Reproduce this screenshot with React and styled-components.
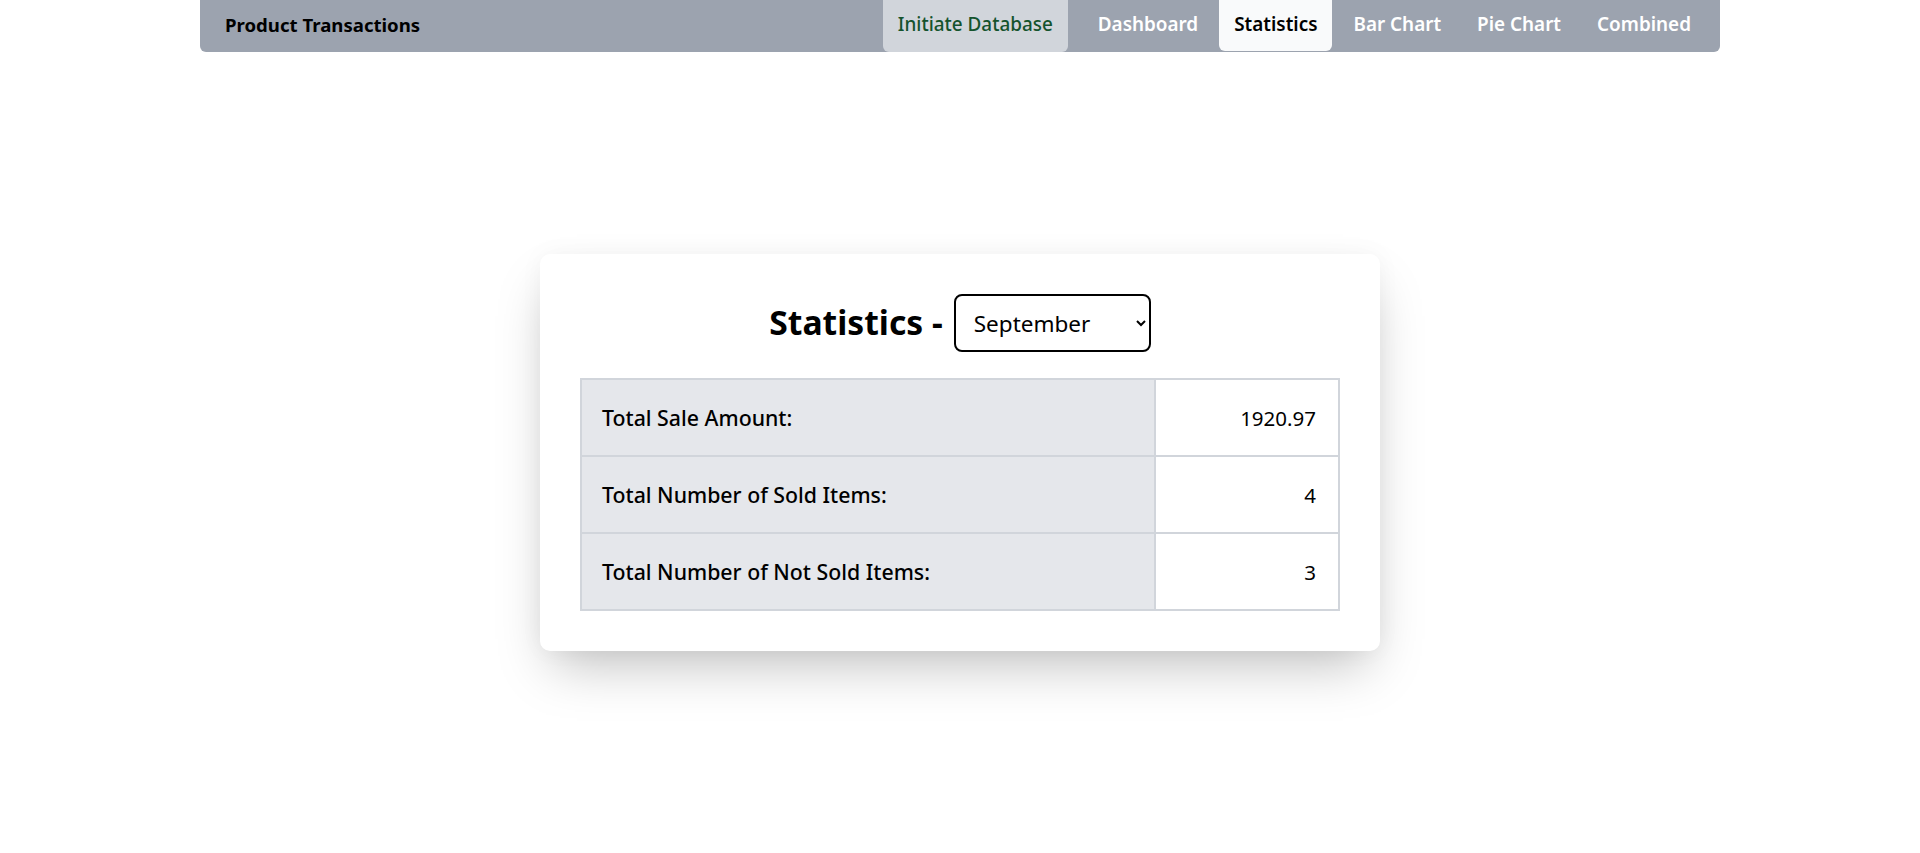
import React from "react";
import styled, { createGlobalStyle } from "styled-components";

const GlobalStyle = createGlobalStyle`
  html, body {
    margin: 0;
    padding: 0;
    background: #ffffff;
    color: #000000;
    font-family: "Noto Sans", "Open Sans", Arial, sans-serif;
  }
  * { box-sizing: border-box; }
`;

const Header = styled.nav`
  width: 1520px;
  height: 52px;
  margin: 0 auto;
  background: #9ca3af;
  border-radius: 0 0 6px 6px;
  display: flex;
  justify-content: space-between;
  align-items: stretch;
  padding: 0 14px 0 25px;
`;

const Brand = styled.div`
  align-self: center;
  padding-bottom: 4px;
  font-size: 18.6px;
  font-weight: 700;
  color: #000;
`;

const Menu = styled.div`
  display: flex;
  align-items: flex-start;
  gap: 6px;
`;

const NavItem = styled.a`
  display: flex;
  align-items: center;
  height: ${(p) => (p.$tall ? "52px" : "51px")};
  padding: 0 15px 4px;
  border-radius: 0 0 6px 6px;
  font-size: 18.9px;
  font-weight: ${(p) => (p.$variant === "db" ? 500 : 600)};
  text-decoration: none;
  cursor: pointer;
  margin-right: ${(p) => (p.$variant === "db" ? "9px" : "0")};
  background: ${(p) =>
    p.$variant === "db" ? "#d1d5db" : p.$variant === "active" ? "#f9fafb" : "transparent"};
  color: ${(p) =>
    p.$variant === "db" ? "#14532d" : p.$variant === "active" ? "#000000" : "#ffffff"};
`;

const Main = styled.main`
  min-height: calc(100vh - 52px);
  display: flex;
  align-items: center;
  justify-content: center;
`;

const Card = styled.section`
  width: 840px;
  padding: 40px;
  background: #ffffff;
  border-radius: 10px;
  box-shadow: 0 25px 50px -12px rgba(0, 0, 0, 0.25), 0 0 24px rgba(0, 0, 0, 0.04);
`;

const TitleRow = styled.div`
  display: flex;
  justify-content: center;
  align-items: center;
  gap: 11px;
  margin-bottom: 26px;
`;

const Title = styled.h2`
  margin: 0;
  font-size: 33.7px;
  font-weight: 700;
  line-height: 1;
`;

const MonthSelect = styled.select`
  width: 197px;
  height: 58px;
  border: 2px solid #000000;
  border-radius: 8px;
  background: #ffffff;
  color: #000000;
  font-family: "Noto Sans", "Open Sans", Arial, sans-serif;
  font-size: 22.5px;
  padding: 0 10px 0 14px;
`;

const Table = styled.table`
  width: 100%;
  border-collapse: collapse;
  border: 2px solid #d1d5db;
`;

const Row = styled.tr`
  height: 77px;
`;

const Label = styled.th`
  border: 2px solid #d1d5db;
  background: #e5e7eb;
  text-align: left;
  font-size: 21.3px;
  font-weight: 500;
  padding: 0 20px;
`;

const Value = styled.td`
  width: 184px;
  border: 2px solid #d1d5db;
  background: #ffffff;
  text-align: right;
  font-size: 20.5px;
  font-weight: 400;
  padding: 0 22px;
`;

const months = [
  "January", "February", "March", "April", "May", "June",
  "July", "August", "September", "October", "November", "December",
];

const stats = [
  ["Total Sale Amount:", "1920.97"],
  ["Total Number of Sold Items:", "4"],
  ["Total Number of Not Sold Items:", "3"],
];

export default function App() {
  return (
    <>
      <GlobalStyle />
      <Header>
        <Brand>Product Transactions</Brand>
        <Menu>
          <NavItem $variant="db" $tall>Initiate Database</NavItem>
          <NavItem>Dashboard</NavItem>
          <NavItem $variant="active">Statistics</NavItem>
          <NavItem>Bar Chart</NavItem>
          <NavItem>Pie Chart</NavItem>
          <NavItem>Combined</NavItem>
        </Menu>
      </Header>
      <Main>
        <Card>
          <TitleRow>
            <Title>Statistics -</Title>
            <MonthSelect defaultValue="September">
              {months.map((m) => (
                <option key={m} value={m}>{m}</option>
              ))}
            </MonthSelect>
          </TitleRow>
          <Table>
            <tbody>
              {stats.map(([label, value]) => (
                <Row key={label}>
                  <Label>{label}</Label>
                  <Value>{value}</Value>
                </Row>
              ))}
            </tbody>
          </Table>
        </Card>
      </Main>
    </>
  );
}
